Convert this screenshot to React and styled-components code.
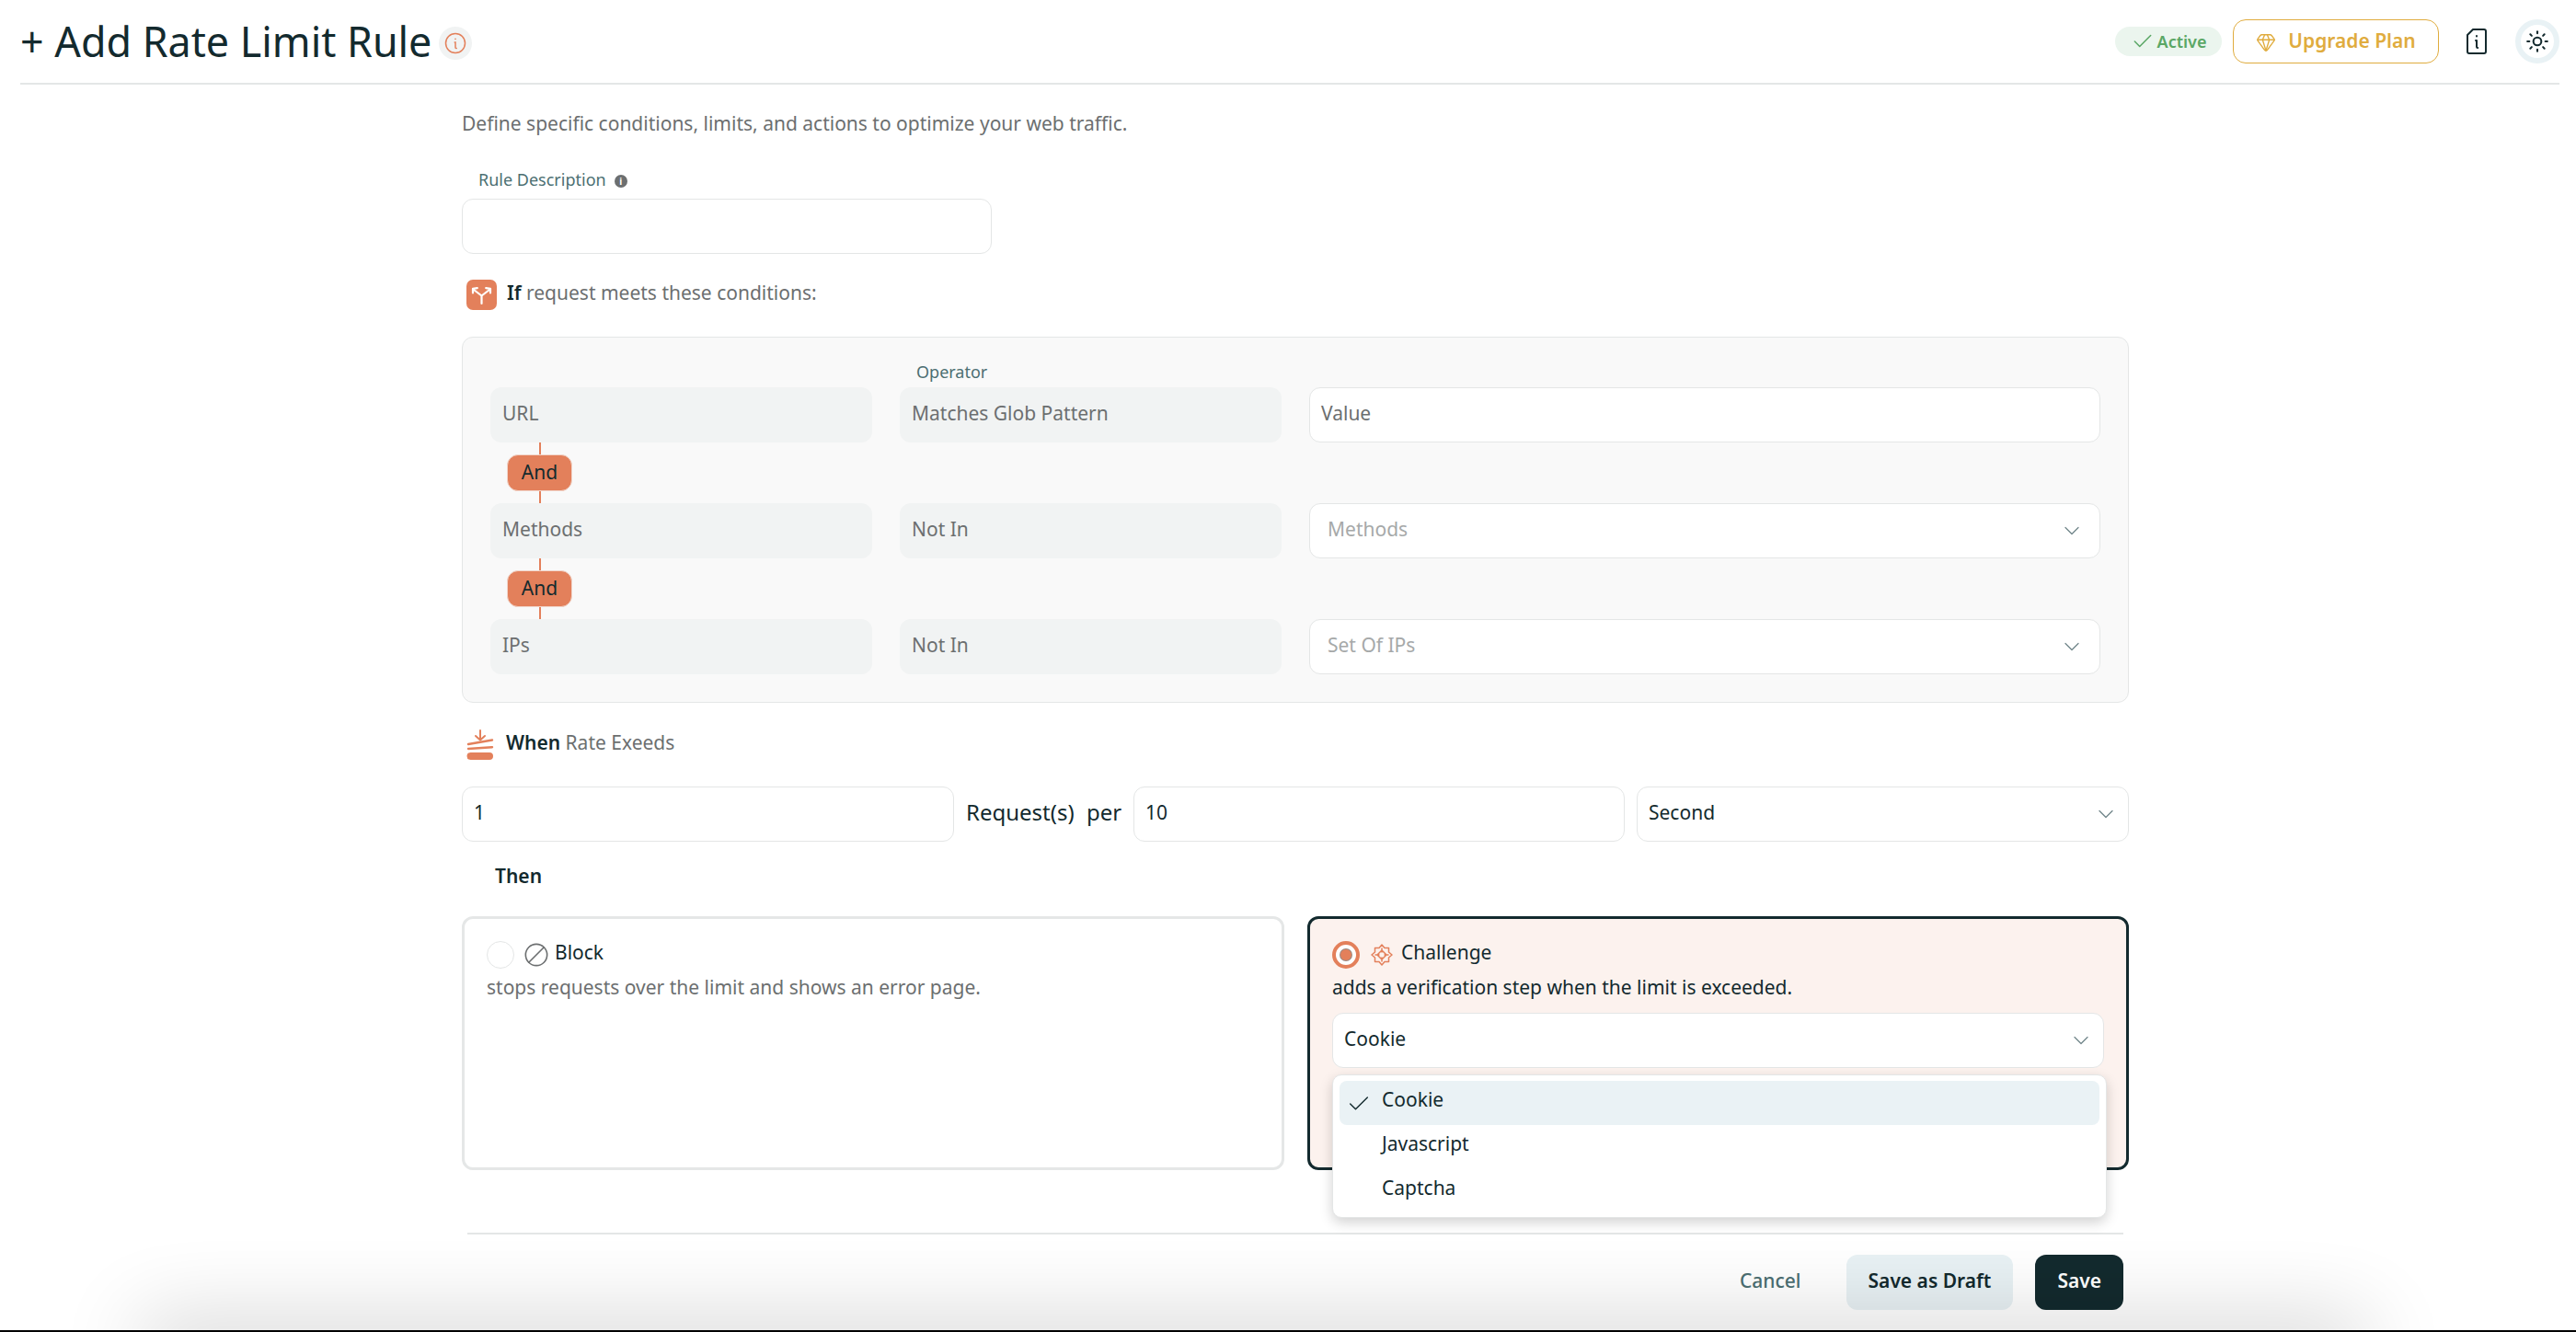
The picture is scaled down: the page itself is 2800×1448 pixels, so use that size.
import React from 'react';
import styled, { createGlobalStyle } from 'styled-components';
import { Ban, Check, ChevronDown, Gem, Sun } from 'lucide-react';

const ink = '#132a2e';
const muted = '#6c6f70';
const teal = '#4c6f72';
const orange = '#e3805b';
const line = '#e4e6e6';

const GlobalStyle = createGlobalStyle`
  html, body {
    margin: 0;
    height: 100%;
    background: #fff;
    overflow: hidden;
  }
  body {
    font-family: "Noto Sans", "Open Sans", sans-serif;
    color: ${ink};
  }
  * {
    box-sizing: border-box;
  }
`;

const Header = styled.header`
  height: 90px;
  padding: 0 18px 0 22px;
  display: flex;
  align-items: center;
  justify-content: space-between;
`;

const TitleGroup = styled.div`
  display: flex;
  align-items: center;
  gap: 8px;
`;

const Title = styled.h1`
  margin: 0 0 1px;
  font-size: 44.8px;
  line-height: 56px;
  font-weight: 400;
`;

const TitleInfo = styled.span`
  width: 36px;
  height: 36px;
  margin-top: 4px;
  border-radius: 50%;
  background: #f1f3f3;
  display: flex;
  align-items: center;
  justify-content: center;
  color: ${orange};
`;

const HeaderActions = styled.div`
  display: flex;
  align-items: center;
`;

const StatusPill = styled.div`
  width: 116px;
  height: 32px;
  border-radius: 16px;
  background: #ebf5ee;
  color: #5aa765;
  font-size: 18px;
  font-weight: 600;
  display: flex;
  align-items: center;
  justify-content: center;
  gap: 3px;
`;

const UpgradeButton = styled.button`
  width: 224px;
  height: 48px;
  margin-left: 12px;
  padding: 0 0 2px;
  border: 1.5px solid #e0ac3e;
  border-radius: 14px;
  background: #fff;
  color: #e0ac3e;
  font: 600 21px "Noto Sans", sans-serif;
  display: flex;
  align-items: center;
  justify-content: center;
  gap: 13px;

  svg {
    margin-top: 4px;
  }
`;

const DocIcon = styled.span`
  margin-left: 30px;
  display: flex;
`;

const ThemeToggle = styled.span`
  width: 48px;
  height: 48px;
  margin-left: 31px;
  border: 6px solid #e9f2f5;
  border-radius: 50%;
  display: flex;
  align-items: center;
  justify-content: center;
`;

const HeaderRule = styled.hr`
  margin: 0 18px 0 22px;
  height: 2px;
  border: 0;
  background: ${line};
`;

const Main = styled.main`
  width: 1812px;
  margin-left: 502px;
`;

const Intro = styled.p`
  margin: 27px 0 0;
  font-size: 21px;
  line-height: 30px;
  color: ${muted};
`;

const FieldLabel = styled.div`
  display: flex;
  align-items: center;
  gap: 9px;
  margin: 34px 0 9px 18px;
  font-size: 18px;
  line-height: 24px;
  color: ${teal};
`;

const HelpDot = styled.span`
  width: 14px;
  height: 14px;
  margin-top: 3px;
  border-radius: 50%;
  background: ${muted};
  color: #fff;
  font-size: 10px;
  line-height: 14px;
  font-weight: 700;
  text-align: center;
`;

const TextBox = styled.input`
  display: block;
  width: 576px;
  height: 60px;
  border: 1px solid ${line};
  border-radius: 12px;
  background: #fff;
`;

const SectionHead = styled.div`
  display: flex;
  align-items: center;
  gap: 11px;
  height: 33px;
  margin: ${(p) => p.$top}px 0 0 5px;
  font-size: 21px;
  color: ${muted};

  b {
    font-weight: 600;
    color: ${ink};
  }
`;

const SectionText = styled.span`
  margin-top: -5px;
`;

const IconTile = styled.span`
  width: 33px;
  height: 33px;
  border-radius: 7px;
  background: ${orange};
  display: flex;
`;

const Panel = styled.section`
  margin-top: 29px;
  padding: 25px 30px 30px;
  border: 1px solid ${line};
  border-radius: 12px;
  background: #f9f9f9;
`;

const Row = styled.div`
  display: grid;
  grid-template-columns: 415px 415px 1fr;
  gap: 30px;
`;

const SmallLabel = styled.div`
  grid-column: 2;
  padding-left: 18px;
  height: 29px;
  font-size: 18px;
  line-height: 24px;
  color: ${teal};
`;

const Field = styled.div`
  height: 60px;
  padding: 0 ${(p) => (p.$faint ? 16 : 10)}px 5px ${(p) => (p.$faint ? 19 : p.$white ? 12 : 13)}px;
  border-radius: 12px;
  border: ${(p) => (p.$white ? `1px solid ${line}` : '0')};
  background: ${(p) => (p.$white ? '#fff' : '#f1f3f3')};
  color: ${(p) => (p.$faint ? '#a6a9a9' : p.$dark ? ink : muted)};
  font-size: 21px;
  display: flex;
  align-items: center;
  justify-content: space-between;

  svg {
    flex: none;
    margin-top: 5px;
    color: #71868a;
  }
`;

const Connector = styled.div`
  width: 71px;
  height: 66px;
  margin-left: 18px;
  display: flex;
  flex-direction: column;
  align-items: center;
`;

const ConnectorLine = styled.span`
  flex: 1;
  width: 2px;
  background: ${orange};
`;

const AndBadge = styled.span`
  width: 71px;
  height: 40px;
  border-radius: 12px;
  border: 1px solid #f1d5ca;
  background: ${orange};
  font-size: 21px;
  line-height: 36px;
  text-align: center;
`;

const RateRow = styled.div`
  display: grid;
  grid-template-columns: 535px 169px 534px 535px;
  column-gap: 13px;
  margin-top: 29px;
`;

const RateText = styled.div`
  font-size: 24px;
  line-height: 56px;
  word-spacing: 7px;
  white-space: nowrap;
`;

const ThenLabel = styled.div`
  margin: 22px 0 0 36px;
  height: 31px;
  font-size: 21px;
  line-height: 30px;
  font-weight: 600;
`;

const Cards = styled.div`
  display: grid;
  grid-template-columns: 894px 893px;
  gap: 25px;
  margin-top: 28px;
`;

const Card = styled.div`
  height: 276px;
  padding: 24px;
  border: 3px solid ${(p) => (p.$active ? ink : '#e5e7e7')};
  border-radius: 12px;
  background: ${(p) => (p.$active ? '#fcf2ee' : '#fff')};
`;

const CardHead = styled.div`
  display: flex;
  align-items: center;
  height: 30px;
  font-size: 21px;
`;

const Radio = styled.span`
  width: 30px;
  height: 30px;
  margin-right: ${(p) => (p.$on ? 12 : 10)}px;
  border-radius: 50%;
  background: #fff;
  border: ${(p) => (p.$on ? `4px solid ${orange}` : `1px solid ${line}`)};
  display: flex;
  align-items: center;
  justify-content: center;

  &::after {
    content: '';
    display: ${(p) => (p.$on ? 'block' : 'none')};
    width: 12px;
    height: 12px;
    border-radius: 50%;
    background: ${orange};
    box-shadow: 0 0 0 1px #9a8a84;
  }
`;

const BlockIcon = styled(Ban)`
  transform: scaleX(-1);
`;

const CardName = styled.span`
  margin-left: ${(p) => (p.$on ? 9 : 6)}px;
  margin-top: -6px;
`;

const CardText = styled.p`
  margin: 5px 0 13px;
  font-size: 21px;
  line-height: 30px;
  color: ${(p) => (p.$active ? ink : muted)};
`;

const SelectWrap = styled.div`
  position: relative;
`;

const Dropdown = styled.ul`
  position: absolute;
  z-index: 2;
  top: 67px;
  left: 0;
  width: 842px;
  height: 156px;
  margin: 0;
  padding: 6px 7px;
  list-style: none;
  border: 1px solid ${line};
  border-radius: 10px;
  background: #fff;
  box-shadow: 0 5px 14px rgba(0, 0, 0, 0.18);
`;

const Option = styled.li`
  height: 48px;
  padding: 0 0 8px ${(p) => (p.$selected ? 7 : 46)}px;
  border-radius: 8px;
  background: ${(p) => (p.$selected ? '#eaf2f5' : 'transparent')};
  font-size: 21px;
  display: flex;
  align-items: center;
  gap: 11px;

  svg {
    margin-top: 9px;
  }
`;

const FooterRule = styled.hr`
  margin: 68px 6px 0;
  height: 2px;
  border: 0;
  background: ${line};
`;

const Actions = styled.div`
  display: flex;
  justify-content: flex-end;
  gap: 24px;
  margin: 22px 6px 0 0;
`;

const Button = styled.button`
  height: 60px;
  padding: 0 ${(p) => (p.$variant ? 24 : 25)}px 5px;
  border: 0;
  border-radius: 12px;
  background: ${(p) =>
    p.$variant === 'primary' ? ink : p.$variant === 'soft' ? '#e8f1f4' : 'transparent'};
  color: ${(p) =>
    p.$variant === 'primary' ? '#fff' : p.$variant === 'soft' ? ink : teal};
  font: ${(p) => (p.$variant ? 600 : 500)} 21px "Noto Sans", sans-serif;
`;

const BottomEdge = styled.div`
  position: fixed;
  z-index: 5;
  left: 0;
  right: 0;
  bottom: 0;
  height: 2px;
  background: #000;
`;

const BottomGlow = styled.div`
  position: fixed;
  z-index: 4;
  left: 165px;
  right: 240px;
  bottom: -30px;
  height: 30px;
  box-shadow: 0 0 90px 12px rgba(0, 0, 0, 0.2);
`;

function InfoCircle() {
  return (
    <svg width="24" height="24" viewBox="0 0 24 24" fill="none" stroke="currentColor" strokeWidth="1.5" strokeLinecap="round">
      <circle cx="12" cy="12" r="10.5" />
      <path d="M12 7.2v.4M11.2 11h.8v5.4c0 .8.5 1.2 1.2 1.2" />
    </svg>
  );
}

function DocInfo() {
  return (
    <svg width="22" height="28" viewBox="0 0 22 28" fill="none" stroke={ink} strokeWidth="2" strokeLinecap="round" strokeLinejoin="round">
      <path d="M7 1h12a2 2 0 0 1 2 2v22a2 2 0 0 1-2 2H3a2 2 0 0 1-2-2V7z" />
      <path d="M11 8v.6M10 13h1v7c0 .7.4 1 1.2 1" />
    </svg>
  );
}

function SplitArrows() {
  return (
    <svg width="33" height="33" viewBox="0 0 33 33" fill="none" stroke="#fff" strokeWidth="2.2" strokeLinecap="round" strokeLinejoin="round">
      <path d="M16.5 26v-8.5L8 11M16.5 17.5l8.5-6.5" />
      <path d="M7 14.5 7 9.8l4.8-.6M26 14.5 26 9.8l-4.8-.6" />
    </svg>
  );
}

function RateIcon() {
  return (
    <svg width="32" height="33" viewBox="0 0 32 33" fill="none" stroke={orange} strokeLinecap="round" strokeLinejoin="round">
      <path d="M15 1v10M10 7l5 4.5L20 7" strokeWidth="2" />
      <path d="M2 16l26-4.5M2 21l26-1.8" strokeWidth="2.4" />
      <rect x="0.5" y="25" width="28.5" height="8" rx="4" fill={orange} stroke="none" />
    </svg>
  );
}

function ChallengeIcon() {
  return (
    <svg width="24" height="24" viewBox="0 0 24 24" fill="none" stroke={orange} strokeWidth="1.5" strokeLinejoin="round">
      <path d="M12 1l3 3.5h4.5V9L23 12l-3.5 3v4.5H15L12 23l-3-3.5H4.5V15L1 12l3.5-3V4.5H9z" />
      <path d="M12 7l5 5-5 5-5-5zM12 4.5v5M12 19.5v-5M4.5 12h5M19.5 12h-5" />
    </svg>
  );
}

export default function App() {
  return (
    <>
      <GlobalStyle />
      <Header>
        <TitleGroup>
          <Title>+ Add Rate Limit Rule</Title>
          <TitleInfo>
            <InfoCircle />
          </TitleInfo>
        </TitleGroup>
        <HeaderActions>
          <StatusPill>
            <Check size={26} strokeWidth={1.4} />
            Active
          </StatusPill>
          <UpgradeButton>
            <Gem size={22} strokeWidth={1.5} />
            Upgrade Plan
          </UpgradeButton>
          <DocIcon>
            <DocInfo />
          </DocIcon>
          <ThemeToggle>
            <Sun size={26} strokeWidth={1.9} color={ink} />
          </ThemeToggle>
        </HeaderActions>
      </Header>
      <HeaderRule />
      <Main>
        <Intro>Define specific conditions, limits, and actions to optimize your web traffic.</Intro>
        <FieldLabel>
          Rule Description
          <HelpDot>i</HelpDot>
        </FieldLabel>
        <TextBox />
        <SectionHead $top={28}>
          <IconTile>
            <SplitArrows />
          </IconTile>
          <SectionText>
            <b>If</b> request meets these conditions:
          </SectionText>
        </SectionHead>
        <Panel>
          <Row>
            <SmallLabel>Operator</SmallLabel>
          </Row>
          <Row>
            <Field>URL</Field>
            <Field>Matches Glob Pattern</Field>
            <Field $white>Value</Field>
          </Row>
          <Connector>
            <ConnectorLine />
            <AndBadge>And</AndBadge>
            <ConnectorLine />
          </Connector>
          <Row>
            <Field>Methods</Field>
            <Field>Not In</Field>
            <Field $white $faint>
              Methods
              <ChevronDown size={28} strokeWidth={1.1} />
            </Field>
          </Row>
          <Connector>
            <ConnectorLine />
            <AndBadge>And</AndBadge>
            <ConnectorLine />
          </Connector>
          <Row>
            <Field>IPs</Field>
            <Field>Not In</Field>
            <Field $white $faint>
              Set Of IPs
              <ChevronDown size={28} strokeWidth={1.1} />
            </Field>
          </Row>
        </Panel>
        <SectionHead $top={29}>
          <RateIcon />
          <SectionText>
            <b>When</b> Rate Exeeds
          </SectionText>
        </SectionHead>
        <RateRow>
          <Field $white $dark>1</Field>
          <RateText>Request(s) per</RateText>
          <Field $white $dark>10</Field>
          <Field $white $dark>
            Second
            <ChevronDown size={28} strokeWidth={1.1} />
          </Field>
        </RateRow>
        <ThenLabel>Then</ThenLabel>
        <Cards>
          <Card>
            <CardHead>
              <Radio />
              <BlockIcon size={28} strokeWidth={1.4} color={muted} />
              <CardName>Block</CardName>
            </CardHead>
            <CardText>stops requests over the limit and shows an error page.</CardText>
          </Card>
          <Card $active>
            <CardHead>
              <Radio $on />
              <ChallengeIcon />
              <CardName $on>Challenge</CardName>
            </CardHead>
            <CardText $active>adds a verification step when the limit is exceeded.</CardText>
            <SelectWrap>
              <Field $white $dark>
                Cookie
                <ChevronDown size={28} strokeWidth={1.1} />
              </Field>
              <Dropdown>
                <Option $selected>
                  <Check size={28} strokeWidth={1.2} />
                  Cookie
                </Option>
                <Option>Javascript</Option>
                <Option>Captcha</Option>
              </Dropdown>
            </SelectWrap>
          </Card>
        </Cards>
        <FooterRule />
        <Actions>
          <Button>Cancel</Button>
          <Button $variant="soft">Save as Draft</Button>
          <Button $variant="primary">Save</Button>
        </Actions>
      </Main>
      <BottomGlow />
      <BottomEdge />
    </>
  );
}
